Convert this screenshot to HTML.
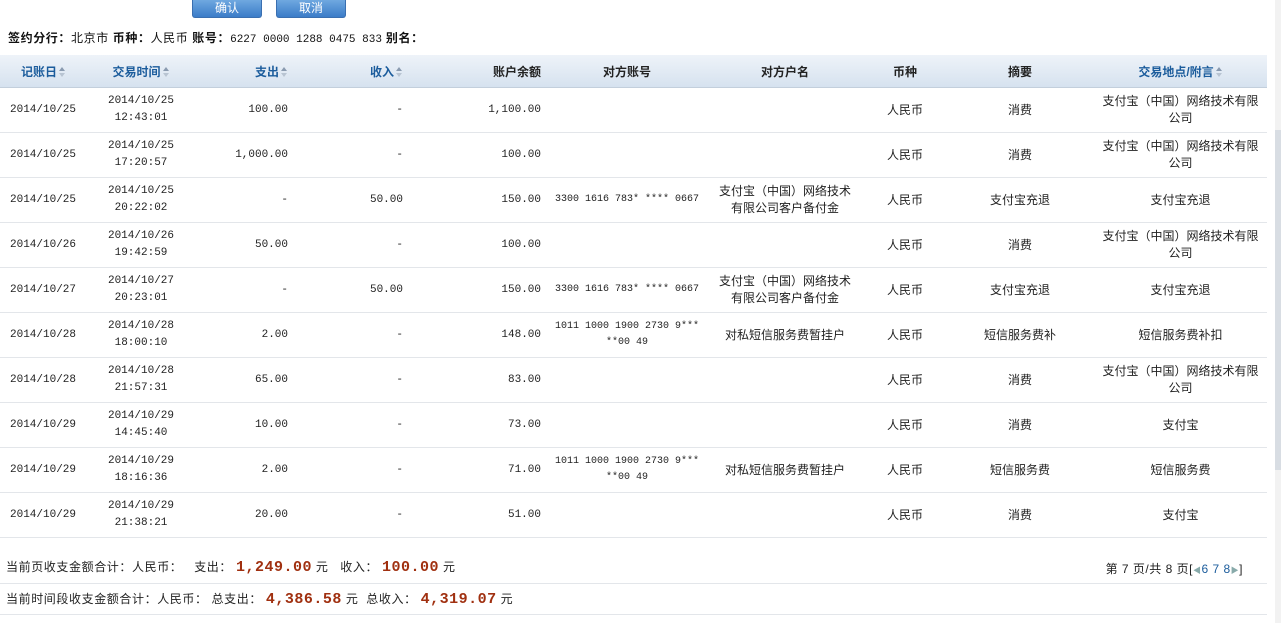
<!DOCTYPE html>
<html><head><meta charset="utf-8"><style>
body{margin:0;width:1281px;height:623px;background:#fff;overflow:hidden;position:relative;font-family:"Liberation Sans","Noto Sans CJK SC",sans-serif;font-size:12px;color:#222}
.btn{position:absolute;top:0;height:18px;width:70px;border-radius:0 0 3px 3px;background:linear-gradient(#6fa8e0,#3b7cc8);color:#fff;text-align:center;line-height:17px;font-size:12px;border:1px solid #3a6fb0;border-top:none;box-sizing:border-box}
.info{position:absolute;left:8px;top:29px;font-size:12px;color:#111;letter-spacing:0.6px}
.info b{font-weight:bold}
.mono{font-family:"Liberation Mono","Noto Sans CJK SC",monospace;font-size:11px}
table{position:absolute;left:0;top:55px;border-collapse:collapse;table-layout:fixed;width:1267px}
th{height:32px;background:linear-gradient(#eef3f9,#d6e2ef);border-bottom:1px solid #c3cfdc;font-weight:bold;font-size:12px;color:#222;padding:0}
th.s{color:#1b5c9c}
td{height:44px;border-bottom:1px solid #e3e6ea;padding:0;line-height:17px;font-size:12px}
td.n{font-family:"Liberation Mono",monospace;font-size:11px}
td.a{font-family:"Liberation Mono",monospace;font-size:10px;line-height:16px}
.r{text-align:right;padding-right:7px}
.c{text-align:center}
.l{padding-left:10px}
.ar{display:inline-block;width:7px;height:10px;position:relative;vertical-align:-1px;margin-left:2px}
.ar:before{content:"";position:absolute;left:0;top:0;border-left:3.5px solid transparent;border-right:3.5px solid transparent;border-bottom:4px solid #8a9bb0}
.ar:after{content:"";position:absolute;left:0;top:6px;border-left:3.5px solid transparent;border-right:3.5px solid transparent;border-top:4px solid #b8c4d2}
.sum{position:absolute;left:6px;font-size:12px;letter-spacing:0.6px}
.red{color:#a03010;font-family:"Liberation Mono",monospace;font-size:15px;font-weight:bold;letter-spacing:0.5px}
.hl{position:absolute;left:0;width:1267px;height:1px;background:#e3e6ea}
.sb{position:absolute;right:0;top:0;width:6px;height:623px;background:#f2f2f2}
.sbt{position:absolute;right:0;top:130px;width:6px;height:340px;background:#d8dde3}
</style></head><body>
<div class="btn" style="left:192px">确认</div>
<div class="btn" style="left:276px">取消</div>
<div class="info"><b>签约分行：</b>北京市 <b>币种：</b>人民币 <b>账号：</b><span class="mono" style="letter-spacing:0">6227 0000 1288 0475 833</span> <b>别名：</b></div>
<table>
<colgroup><col style="width:87px"><col style="width:108px"><col style="width:100px"><col style="width:115px"><col style="width:138px"><col style="width:158px"><col style="width:158px"><col style="width:82px"><col style="width:148px"><col style="width:173px"></colgroup>
<tr><th class="s">记账日<span class="ar"></span></th><th class="s">交易时间<span class="ar"></span></th><th class="s r">支出<span class="ar"></span></th><th class="s r">收入<span class="ar"></span></th><th class="r">账户余额</th><th class="c">对方账号</th><th class="c">对方户名</th><th class="c">币种</th><th class="c">摘要</th><th class="s c">交易地点/附言<span class="ar"></span></th></tr>
<tr><td class="n l">2014/10/25</td><td class="n c">2014/10/25<br>12:43:01</td><td class="n r">100.00</td><td class="n r">-</td><td class="n r">1,100.00</td><td></td><td></td><td class="c">人民币</td><td class="c">消费</td><td class="c">支付宝（中国）网络技术有限<br>公司</td></tr>
<tr><td class="n l">2014/10/25</td><td class="n c">2014/10/25<br>17:20:57</td><td class="n r">1,000.00</td><td class="n r">-</td><td class="n r">100.00</td><td></td><td></td><td class="c">人民币</td><td class="c">消费</td><td class="c">支付宝（中国）网络技术有限<br>公司</td></tr>
<tr><td class="n l">2014/10/25</td><td class="n c">2014/10/25<br>20:22:02</td><td class="n r">-</td><td class="n r">50.00</td><td class="n r">150.00</td><td class="a c">3300 1616 783* **** 0667</td><td class="c">支付宝（中国）网络技术<br>有限公司客户备付金</td><td class="c">人民币</td><td class="c">支付宝充退</td><td class="c">支付宝充退</td></tr>
<tr><td class="n l">2014/10/26</td><td class="n c">2014/10/26<br>19:42:59</td><td class="n r">50.00</td><td class="n r">-</td><td class="n r">100.00</td><td></td><td></td><td class="c">人民币</td><td class="c">消费</td><td class="c">支付宝（中国）网络技术有限<br>公司</td></tr>
<tr><td class="n l">2014/10/27</td><td class="n c">2014/10/27<br>20:23:01</td><td class="n r">-</td><td class="n r">50.00</td><td class="n r">150.00</td><td class="a c">3300 1616 783* **** 0667</td><td class="c">支付宝（中国）网络技术<br>有限公司客户备付金</td><td class="c">人民币</td><td class="c">支付宝充退</td><td class="c">支付宝充退</td></tr>
<tr><td class="n l">2014/10/28</td><td class="n c">2014/10/28<br>18:00:10</td><td class="n r">2.00</td><td class="n r">-</td><td class="n r">148.00</td><td class="a c">1011 1000 1900 2730 9***<br>**00 49</td><td class="c">对私短信服务费暂挂户</td><td class="c">人民币</td><td class="c">短信服务费补</td><td class="c">短信服务费补扣</td></tr>
<tr><td class="n l">2014/10/28</td><td class="n c">2014/10/28<br>21:57:31</td><td class="n r">65.00</td><td class="n r">-</td><td class="n r">83.00</td><td></td><td></td><td class="c">人民币</td><td class="c">消费</td><td class="c">支付宝（中国）网络技术有限<br>公司</td></tr>
<tr><td class="n l">2014/10/29</td><td class="n c">2014/10/29<br>14:45:40</td><td class="n r">10.00</td><td class="n r">-</td><td class="n r">73.00</td><td></td><td></td><td class="c">人民币</td><td class="c">消费</td><td class="c">支付宝</td></tr>
<tr><td class="n l">2014/10/29</td><td class="n c">2014/10/29<br>18:16:36</td><td class="n r">2.00</td><td class="n r">-</td><td class="n r">71.00</td><td class="a c">1011 1000 1900 2730 9***<br>**00 49</td><td class="c">对私短信服务费暂挂户</td><td class="c">人民币</td><td class="c">短信服务费</td><td class="c">短信服务费</td></tr>
<tr><td class="n l">2014/10/29</td><td class="n c">2014/10/29<br>21:38:21</td><td class="n r">20.00</td><td class="n r">-</td><td class="n r">51.00</td><td></td><td></td><td class="c">人民币</td><td class="c">消费</td><td class="c">支付宝</td></tr>
</table>
<div class="sum" style="top:558px">当前页收支金额合计：人民币：&nbsp;&nbsp; 支出：&nbsp;<span class="red">1,249.00</span> 元&nbsp;&nbsp; 收入：&nbsp;<span class="red">100.00</span> 元</div>
<div style="position:absolute;right:38px;top:560px;font-size:12px;letter-spacing:0.5px">第 7 页/共 8 页[<span style="color:#1b5c9c"><span style="font-size:8px;color:#8aa">◀</span>6 7 8<span style="font-size:8px;color:#8aa">▶</span></span>]</div>
<div class="hl" style="top:583px"></div>
<div class="sum" style="top:590px">当前时间段收支金额合计：人民币： 总支出：&nbsp;<span class="red">4,386.58</span> 元&nbsp; 总收入：&nbsp;<span class="red">4,319.07</span> 元</div>
<div class="hl" style="top:614px"></div>
<div class="sb"></div><div class="sbt"></div>
</body></html>
